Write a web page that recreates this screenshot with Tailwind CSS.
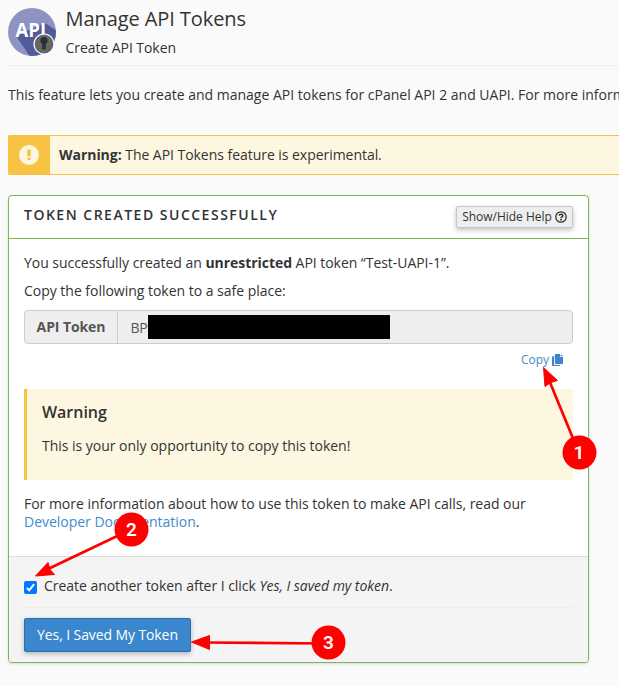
<!DOCTYPE html>
<html lang="en">
<head>
<meta charset="utf-8">
<title>Manage API Tokens</title>
<script src="https://cdn.jsdelivr.net/npm/@tailwindcss/browser@4"></script>
</head>
<body class="relative h-[686px] w-[619px] overflow-hidden bg-[#fafafa] pl-2 font-['Open_Sans','Noto_Sans',sans-serif] text-[14px] leading-[18px] tracking-[-0.02px] text-[#333]">
<header class="flex h-[66px] gap-[9.5px] border-b border-[#eee] pt-2">
  <svg class="size-12 shrink-0" viewBox="0 0 48 48">
    <defs><clipPath id="disc"><circle cx="24" cy="24" r="24"/></clipPath></defs>
    <circle cx="24" cy="24" r="24" fill="#8d94c4"/>
    <path d="M8 28L37 15L60 30L40 60L23 50Z" fill="#515b98" clip-path="url(#disc)"/>
    <text x="7.5" y="28.5" font-family="Open Sans, sans-serif" font-weight="700" font-size="19" textLength="30.5" lengthAdjust="spacingAndGlyphs" fill="#fff">API</text>
    <circle cx="36" cy="36" r="10" fill="#666" stroke="#fff" stroke-width="1.2"/>
    <circle cx="36" cy="32.5" r="3.6" fill="#263238"/><path d="M34.2 33h3.6v8.5h-3.6z" fill="#263238"/>
  </svg>
  <div>
    <h1 class="text-[20px] leading-[22px] tracking-[-0.08px]">Manage API Tokens</h1>
    <p class="mt-[9px] tracking-[-0.06px]">Create API Token</p>
  </div>
</header>
<p class="mt-5 overflow-hidden whitespace-nowrap tracking-normal">This feature lets you create and manage API tokens for cPanel API 2 and UAPI. For more information</p>
<section class="mt-[31px] flex h-10 rounded-l-[2px] border border-r-0 border-[#f8c342] bg-[#fdf7e1]">
  <div class="flex w-[41px] items-center justify-center bg-[#f8c342] pr-[2px]">
    <svg class="size-5" viewBox="0 0 20 20"><circle cx="10" cy="10" r="10" fill="#fdf7e1"/><path d="M7.9 4.8h4.2l-.6 6.4h-3zM8.4 12.4h3.2v2.7H8.4z" fill="#f8c342"/></svg>
  </div>
  <p class="pt-[10px] pl-[9px] tracking-[-0.04px]"><b>Warning:</b> The API Tokens feature is experimental.</p>
</section>
<main class="mt-5 flex h-[468px] w-[581px] flex-col overflow-hidden rounded border border-[#7cb950] bg-white shadow-sm">
  <div class="flex h-[43px] shrink-0 items-start justify-between border-b border-[#7cb950] pr-[15px] pl-[15px]">
    <h2 class="pt-[10px] font-semibold tracking-[1.5px]">TOKEN CREATED SUCCESSFULLY</h2>
    <button class="mt-[10px] flex h-[22px] w-[117px] items-center justify-center gap-[3px] rounded-[2px] border border-[#c6c6c6] bg-[#eee] text-[12px] whitespace-nowrap shadow-[0_2px_5px_rgba(0,0,0,.25)]">Show/Hide Help
      <svg class="size-3 shrink-0" viewBox="0 0 12 12" fill="none" stroke="#333"><circle cx="6" cy="6" r="5.2" stroke-width="1.3"/><path d="M4.2 4.6C4.4 2.7 7.8 2.7 7.8 4.7C7.8 6 6 5.9 6 7.2" stroke-width="1.6"/><path d="M6 8v1.5" stroke-width="1.7"/></svg>
    </button>
  </div>
  <div class="h-[317px] shrink-0 px-[15px] pt-[15px]">
    <p class="tracking-[-0.04px]">You successfully created an <b>unrestricted</b> API token “Test-UAPI-1”.</p>
    <p class="mt-[10px]">Copy the following token to a safe place:</p>
    <div class="mt-[10px] flex h-[34px] items-center rounded border border-[#ccc] bg-[#eee] text-[#555]">
      <b class="flex h-full w-[93px] shrink-0 items-center justify-center border-r border-[#ccc] tracking-[-0.1px]">API Token</b>
      <span class="w-[30px] pt-px pl-[12.5px] tracking-[-0.2px]">BP</span><span class="h-6 w-[242px] bg-black"></span>
    </div>
    <a class="mt-[7px] mr-[10px] flex items-center justify-end gap-[3px] text-[12px] text-[#428bca]">Copy
      <svg class="h-3 w-[11px]" viewBox="0 0 11 12" fill="#3e84cc"><path d="M3.6 0H8v3h3v6.2q0 .8-.8.8H3.6q-.8 0-.8-.8V.8q0-.8.8-.8zM8.7 0L11 2.3H8.7zM.8 2.2H2v8q0 .7.7.7h5.5v.3q0 .8-.8.8H.8q-.8 0-.8-.8V3q0-.8.8-.8z"/></svg>
    </a>
    <div class="mt-5 h-[91px] border-l-[3px] border-[#f8c342] bg-[#fdf7e1] pt-[14px] pl-[15px]">
      <h3 class="text-[16px] font-semibold">Warning</h3>
      <p class="mt-4">This is your only opportunity to copy this token!</p>
    </div>
    <p class="mt-[15px]">For more information about how to use this token to make API calls, read our <br><a class="text-[#428bca]">Developer Documentation</a>.</p>
  </div>
  <footer class="flex-1 border-t border-[#ddd] bg-[#f4f4f4] px-[15px]">
    <label class="flex h-[51px] items-start border-b border-[#ececec] pt-5">
      <svg class="mt-1 mr-[7px] size-[13px]" viewBox="0 0 13 13"><rect width="13" height="13" rx="2" fill="#0075ff"/><path d="M2.8 6.9L5.2 9.3L10.2 3.1" fill="none" stroke="#fff" stroke-width="2"/></svg>
      <span class="tracking-[-0.04px]">Create another token after I click <i>Yes, I saved my token</i>.</span>
    </label>
    <button class="mt-[10px] h-[34px] w-[167px] rounded-[2px] border border-[#2a6eb0] bg-[#3a87cd] text-center tracking-[-0.1px] whitespace-nowrap text-white shadow-[0_2px_5px_rgba(0,0,0,.25)]">Yes, I Saved My Token</button>
  </footer>
</main>
<svg class="pointer-events-none absolute inset-0 h-[686px] w-[619px]" viewBox="0 0 619 686" fill="#f00">
  <g stroke="#f00" stroke-width="2.7"><path d="M579 453L549 380"/><path d="M132 529L48 569"/><path d="M328 643.5L205 642.5"/></g>
  <g stroke="#f00" stroke-linejoin="round"><path d="M543.5 367.5L557.5 380.5L551 382.5L545 386.5Z"/><path d="M35.5 576L48 562.5L50 569.5L54.5 574.5Z"/><path d="M191.5 642L209.5 635.5V649.5Z"/></g>
  <circle cx="579.5" cy="452.5" r="17"/><circle cx="131.5" cy="529.5" r="17"/><circle cx="328.5" cy="642.5" r="17"/>
  <g fill="#fff" font-family="Roboto, sans-serif" font-size="19" font-weight="600" text-anchor="middle"><text x="579" y="459">1</text><text x="131.5" y="536">2</text><text x="328.5" y="649">3</text></g>
</svg>
</body>
</html>
